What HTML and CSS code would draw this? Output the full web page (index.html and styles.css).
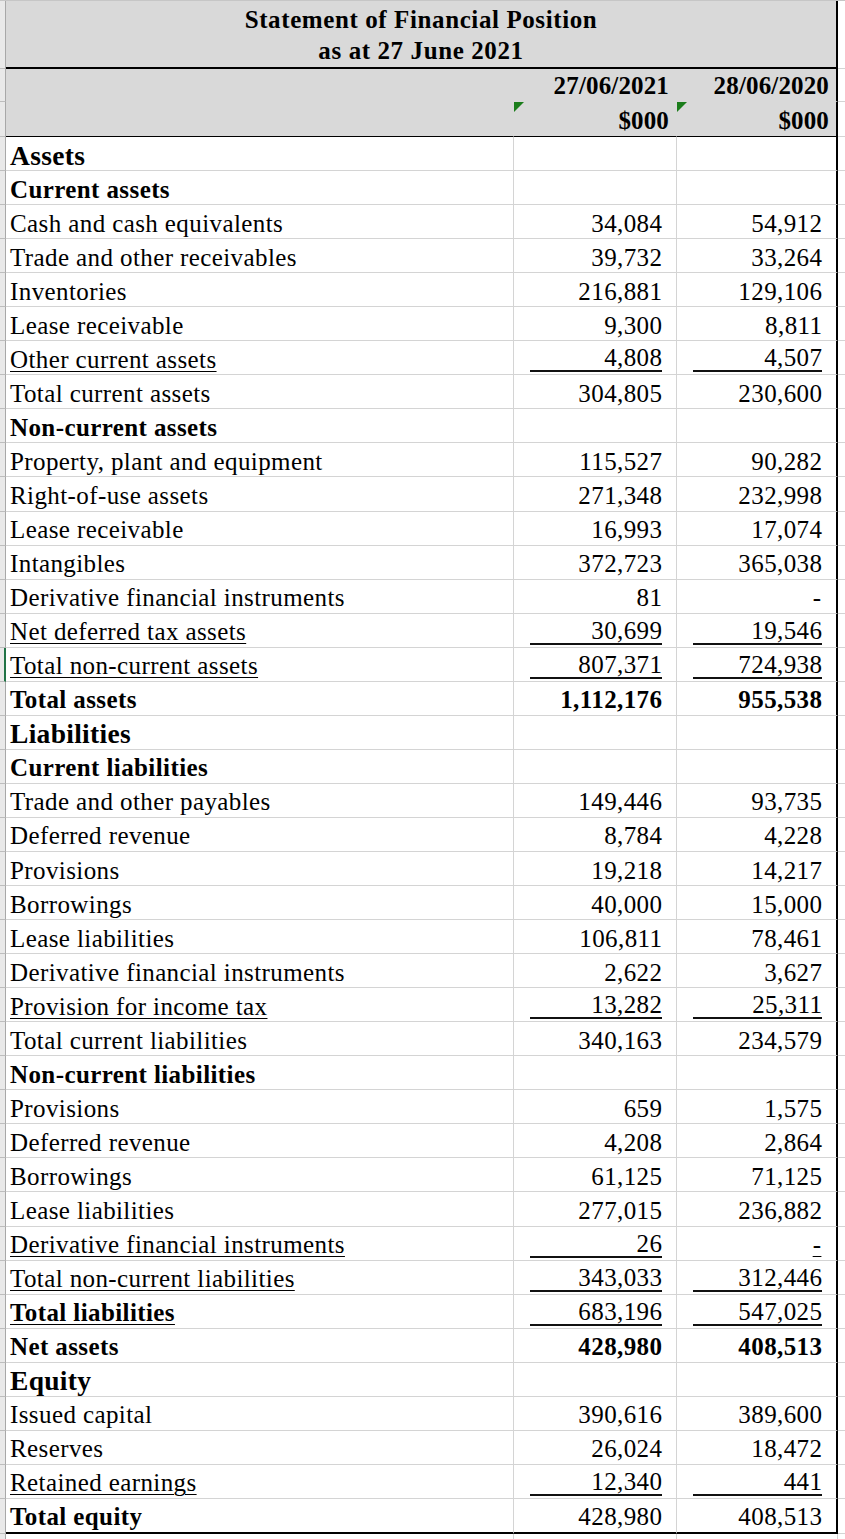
FILE: index.html
```html
<!DOCTYPE html>
<html>
<head>
<meta charset="utf-8">
<title>Statement of Financial Position</title>
<link rel="stylesheet" href="styles.css">
</head>
<body>
<div class="sheet">
  <div class="row row-title">
    <div class="rh"></div>
    <div class="title">Statement of Financial Position<br>as at 27 June 2021</div>
    <div class="x"></div>
  </div>
  <div class="row row-d1">
    <div class="rh"></div>
    <div class="c hd"></div>
    <div class="c hd n"><span>27/06/2021</span></div>
    <div class="c hd n last"><span>28/06/2020</span></div>
    <div class="x"></div>
  </div>
  <div class="row row-d2">
    <div class="rh"></div>
    <div class="c hd"></div>
    <div class="c hd n tri"><span>$000</span></div>
    <div class="c hd n last tri"><span>$000</span></div>
    <div class="x"></div>
  </div>

  <div class="row"><div class="rh"></div><div class="c a big">Assets</div><div class="c n"></div><div class="c n last"></div><div class="x"></div></div>
  <div class="row"><div class="rh"></div><div class="c a bold">Current assets</div><div class="c n"></div><div class="c n last"></div><div class="x"></div></div>
  <div class="row"><div class="rh"></div><div class="c a">Cash and cash equivalents</div><div class="c n"><span>34,084</span></div><div class="c n last"><span>54,912</span></div><div class="x"></div></div>
  <div class="row"><div class="rh"></div><div class="c a">Trade and other receivables</div><div class="c n"><span>39,732</span></div><div class="c n last"><span>33,264</span></div><div class="x"></div></div>
  <div class="row"><div class="rh"></div><div class="c a">Inventories</div><div class="c n"><span>216,881</span></div><div class="c n last"><span>129,106</span></div><div class="x"></div></div>
  <div class="row"><div class="rh"></div><div class="c a">Lease receivable</div><div class="c n"><span>9,300</span></div><div class="c n last"><span>8,811</span></div><div class="x"></div></div>
  <div class="row"><div class="rh"></div><div class="c a"><span class="u">Other current assets</span></div><div class="c n ul"><span>4,808</span></div><div class="c n last ul"><span>4,507</span></div><div class="x"></div></div>
  <div class="row"><div class="rh"></div><div class="c a">Total current assets</div><div class="c n"><span>304,805</span></div><div class="c n last"><span>230,600</span></div><div class="x"></div></div>
  <div class="row"><div class="rh"></div><div class="c a bold">Non-current assets</div><div class="c n"></div><div class="c n last"></div><div class="x"></div></div>
  <div class="row"><div class="rh"></div><div class="c a">Property, plant and equipment</div><div class="c n"><span>115,527</span></div><div class="c n last"><span>90,282</span></div><div class="x"></div></div>
  <div class="row"><div class="rh"></div><div class="c a">Right-of-use assets</div><div class="c n"><span>271,348</span></div><div class="c n last"><span>232,998</span></div><div class="x"></div></div>
  <div class="row"><div class="rh"></div><div class="c a">Lease receivable</div><div class="c n"><span>16,993</span></div><div class="c n last"><span>17,074</span></div><div class="x"></div></div>
  <div class="row"><div class="rh"></div><div class="c a">Intangibles</div><div class="c n"><span>372,723</span></div><div class="c n last"><span>365,038</span></div><div class="x"></div></div>
  <div class="row"><div class="rh"></div><div class="c a">Derivative financial instruments</div><div class="c n"><span>81</span></div><div class="c n last"><span class="dash">-</span></div><div class="x"></div></div>
  <div class="row"><div class="rh"></div><div class="c a"><span class="u">Net deferred tax assets</span></div><div class="c n ul"><span>30,699</span></div><div class="c n last ul"><span>19,546</span></div><div class="x"></div></div>
  <div class="row"><div class="rh sel"></div><div class="c a"><span class="u">Total non-current assets</span></div><div class="c n ul"><span>807,371</span></div><div class="c n last ul"><span>724,938</span></div><div class="x"></div></div>
  <div class="row"><div class="rh"></div><div class="c a bold">Total assets</div><div class="c n bold"><span>1,112,176</span></div><div class="c n last bold"><span>955,538</span></div><div class="x"></div></div>
  <div class="row"><div class="rh"></div><div class="c a big">Liabilities</div><div class="c n"></div><div class="c n last"></div><div class="x"></div></div>
  <div class="row"><div class="rh"></div><div class="c a bold">Current liabilities</div><div class="c n"></div><div class="c n last"></div><div class="x"></div></div>
  <div class="row"><div class="rh"></div><div class="c a">Trade and other payables</div><div class="c n"><span>149,446</span></div><div class="c n last"><span>93,735</span></div><div class="x"></div></div>
  <div class="row"><div class="rh"></div><div class="c a">Deferred revenue</div><div class="c n"><span>8,784</span></div><div class="c n last"><span>4,228</span></div><div class="x"></div></div>
  <div class="row"><div class="rh"></div><div class="c a">Provisions</div><div class="c n"><span>19,218</span></div><div class="c n last"><span>14,217</span></div><div class="x"></div></div>
  <div class="row"><div class="rh"></div><div class="c a">Borrowings</div><div class="c n"><span>40,000</span></div><div class="c n last"><span>15,000</span></div><div class="x"></div></div>
  <div class="row"><div class="rh"></div><div class="c a">Lease liabilities</div><div class="c n"><span>106,811</span></div><div class="c n last"><span>78,461</span></div><div class="x"></div></div>
  <div class="row"><div class="rh"></div><div class="c a">Derivative financial instruments</div><div class="c n"><span>2,622</span></div><div class="c n last"><span>3,627</span></div><div class="x"></div></div>
  <div class="row"><div class="rh"></div><div class="c a"><span class="u">Provision for income tax</span></div><div class="c n ul"><span>13,282</span></div><div class="c n last ul"><span>25,311</span></div><div class="x"></div></div>
  <div class="row"><div class="rh"></div><div class="c a">Total current liabilities</div><div class="c n"><span>340,163</span></div><div class="c n last"><span>234,579</span></div><div class="x"></div></div>
  <div class="row"><div class="rh"></div><div class="c a bold">Non-current liabilities</div><div class="c n"></div><div class="c n last"></div><div class="x"></div></div>
  <div class="row"><div class="rh"></div><div class="c a">Provisions</div><div class="c n"><span>659</span></div><div class="c n last"><span>1,575</span></div><div class="x"></div></div>
  <div class="row"><div class="rh"></div><div class="c a">Deferred revenue</div><div class="c n"><span>4,208</span></div><div class="c n last"><span>2,864</span></div><div class="x"></div></div>
  <div class="row"><div class="rh"></div><div class="c a">Borrowings</div><div class="c n"><span>61,125</span></div><div class="c n last"><span>71,125</span></div><div class="x"></div></div>
  <div class="row"><div class="rh"></div><div class="c a">Lease liabilities</div><div class="c n"><span>277,015</span></div><div class="c n last"><span>236,882</span></div><div class="x"></div></div>
  <div class="row"><div class="rh"></div><div class="c a"><span class="u">Derivative financial instruments</span></div><div class="c n ul"><span>26</span></div><div class="c n last"><span class="dash u">-</span></div><div class="x"></div></div>
  <div class="row"><div class="rh"></div><div class="c a"><span class="u">Total non-current liabilities</span></div><div class="c n ul"><span>343,033</span></div><div class="c n last ul"><span>312,446</span></div><div class="x"></div></div>
  <div class="row"><div class="rh"></div><div class="c a bold"><span class="u">Total liabilities</span></div><div class="c n ul"><span>683,196</span></div><div class="c n last ul"><span>547,025</span></div><div class="x"></div></div>
  <div class="row"><div class="rh"></div><div class="c a bold">Net assets</div><div class="c n bold"><span>428,980</span></div><div class="c n last bold"><span>408,513</span></div><div class="x"></div></div>
  <div class="row"><div class="rh"></div><div class="c a big">Equity</div><div class="c n"></div><div class="c n last"></div><div class="x"></div></div>
  <div class="row"><div class="rh"></div><div class="c a">Issued capital</div><div class="c n"><span>390,616</span></div><div class="c n last"><span>389,600</span></div><div class="x"></div></div>
  <div class="row"><div class="rh"></div><div class="c a">Reserves</div><div class="c n"><span>26,024</span></div><div class="c n last"><span>18,472</span></div><div class="x"></div></div>
  <div class="row"><div class="rh"></div><div class="c a"><span class="u">Retained earnings</span></div><div class="c n ul"><span>12,340</span></div><div class="c n last ul"><span>441</span></div><div class="x"></div></div>
  <div class="row row-end"><div class="rh"></div><div class="c a bold">Total equity</div><div class="c n"><span>428,980</span></div><div class="c n last"><span>408,513</span></div><div class="x"></div></div>
  <div class="row row-fill"><div class="rh"></div><div class="f"></div><div class="f"></div><div class="f"></div><div class="x"></div></div>
</div>
</body>
</html>
```
FILE: styles.css
```css
html, body {
  margin: 0;
  padding: 0;
  background: #ffffff;
}
body {
  font-family: "Liberation Serif", "Times New Roman", serif;
  color: #000000;
}
.sheet {
  width: 845px;
  border-top: 1px solid #c6c6c6;
  box-sizing: border-box;
}
.row {
  display: grid;
  grid-template-columns: 6px 508px 163px 161px 7px;
  height: 34.06px;
}
.row > div {
  box-sizing: border-box;
  border-bottom: 1px solid #d4d4d4;
  min-width: 0;
}
.rh {
  background: #e9e9e9;
  border-right: 1px solid #a8a8a8;
  border-bottom-color: #bdbdbd !important;
}
.rh.sel {
  border-right: 2px solid #217346;
}
.c {
  display: flex;
  align-items: flex-end;
  font-size: 25px;
  letter-spacing: 0.4px;
  line-height: 28px;
  padding-bottom: 0.5px;
  border-right: 1px solid #d4d4d4;
  white-space: nowrap;
  position: relative;
}
.a {
  padding-left: 4px;
}
.n {
  justify-content: flex-end;
  padding-right: 13.6px;
}
.last {
  border-right: 2px solid #000000;
}
.bold {
  font-weight: bold;
}
.big {
  font-weight: bold;
  font-size: 27.5px;
  letter-spacing: 0.3px;
}
.u {
  text-decoration: underline;
  text-decoration-thickness: 1px;
  text-underline-offset: 3px;
}
.n.ul {
  padding-left: 16px;
  padding-bottom: 2px;
}
.n.ul span {
  flex: 1;
  text-align: right;
  line-height: 24px;
  border-bottom: 2px solid #111111;
}
.dash {
  padding-right: 1px;
}

/* header */
.row-title {
  height: 68px;
}
.title {
  grid-column: 2 / 5;
  background: #d9d9d9;
  border-right: 2px solid #000000;
  border-bottom: 2px solid #000000 !important;
  display: flex;
  align-items: flex-end;
  justify-content: center;
  text-align: center;
  font-weight: bold;
  font-size: 25px;
  letter-spacing: 0.6px;
  line-height: 31px;
  padding-bottom: 1px;
}
.row-d1 {
  height: 33px;
}
.row-d2 {
  height: 35px;
}
.hd {
  background: #d9d9d9;
  border-right-color: #d9d9d9;
  border-bottom-color: #d9d9d9 !important;
  font-weight: bold;
  letter-spacing: 0.15px;
  padding-bottom: 1px;
}
.hd.n {
  padding-right: 7px;
}
.hd.last {
  border-right: 2px solid #000000;
}
.row-d2 .c {
  border-bottom: 1px solid #000000 !important;
}
.tri::before {
  content: "";
  position: absolute;
  top: 0;
  left: 0;
  width: 0;
  height: 0;
  border-top: 10px solid #1b7d1b;
  border-right: 10px solid transparent;
}

/* bottom */
.row-end {
  height: 35px;
}
.row-end .c {
  border-bottom: 2px solid #000000 !important;
}
.row-fill {
  height: 10px;
}
.row-fill > div {
  border-bottom: none;
}
.f {
  border-right: 1px solid #d4d4d4;
}
```
